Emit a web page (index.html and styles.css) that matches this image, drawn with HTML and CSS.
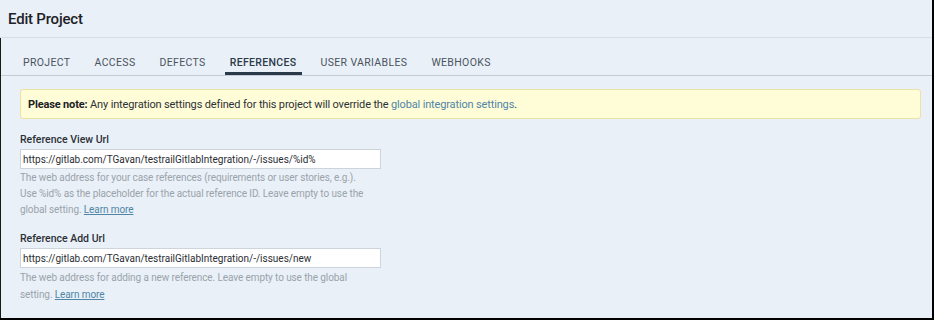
FILE: index.html
```html
<!DOCTYPE html>
<html>
<head>
<meta charset="utf-8">
<link rel="stylesheet" href="styles.css">
</head>
<body>
<div class="frame">
  <header class="head"><h1 class="title">Edit Project</h1></header>
  <div class="main">
    <nav class="tabs">
      <span class="tab">PROJECT</span>
      <span class="tab">ACCESS</span>
      <span class="tab">DEFECTS</span>
      <span class="tab active">REFERENCES</span>
      <span class="tab">USER VARIABLES</span>
      <span class="tab">WEBHOOKS</span>
    </nav>
    <div class="content">
      <div class="note"><b>Please note:</b> Any integration settings defined for this project will override the <a class="link-plain" href="#">global integration settings</a>.</div>
      <div class="field">
        <label class="label">Reference View Url</label>
        <input class="input" type="text" value="https://gitlab.com/TGavan/testrailGitlabIntegration/-/issues/%id%">
        <p class="help">The web address for your case references (requirements or user stories, e.g.).<br>Use %id% as the placeholder for the actual reference ID. Leave empty to use the<br>global setting. <a class="link" href="#">Learn more</a></p>
      </div>
      <div class="field">
        <label class="label">Reference Add Url</label>
        <input class="input" type="text" value="https://gitlab.com/TGavan/testrailGitlabIntegration/-/issues/new">
        <p class="help help-last">The web address for adding a new reference. Leave empty to use the global<br>setting. <a class="link" href="#">Learn more</a></p>
      </div>
    </div>
  </div>
</div>
</body>
</html>
```
FILE: styles.css
```css
* { box-sizing: border-box; }
html, body { margin: 0; padding: 0; }
body {
  width: 934px;
  height: 320px;
  overflow: hidden;
  background: #e9f0f8;
  font-family: Roboto, "Liberation Sans", sans-serif;
}
.frame {
  width: 934px;
  height: 320px;
  border-right: 2px solid #000;
  border-bottom: 2px solid #000;
  display: flex;
  flex-direction: column;
}
.head {
  height: 38px;
  border-bottom: 1px solid #d6dee7;
  display: flex;
  align-items: center;
  padding-left: 8px;
}
.title {
  margin: 0;
  font-size: 15px;
  font-weight: 500;
  color: #1e2126;
  letter-spacing: -0.2px;
}
.main {
  flex: 1;
  border-left: 1px solid #1a1a1a;
}
.tabs {
  display: flex;
  gap: 14px;
  padding: 0 0 0 17px;
  height: 38px;
  align-items: flex-end;
  border-bottom: 1px solid #c3ccd6;
}
.tab {
  padding: 0 5px 2px;
  font-size: 10.5px;
  letter-spacing: 0.35px;
  color: #4b545d;
  border-bottom: 3px solid transparent;
  line-height: 14px;
}
.tab.active {
  color: #2b3a48;
  font-weight: 500;
  border-bottom-color: #2b3a48;
}
.content {
  padding: 13px 11px 0 19px;
}
.note {
  height: 30px;
  background: #fffcd8;
  border: 1px solid #ece2a4;
  border-radius: 3px;
  padding: 0 7px;
  display: flex;
  align-items: center;
  font-size: 11px;
  color: #2d3237;
  letter-spacing: -0.15px;
  white-space: pre;
}
.note b { font-weight: 700; color: #1c2024; }
.link-plain { color: #4f86a6; text-decoration: none; }
.field {
  margin-top: 14px;
  display: flex;
  flex-direction: column;
  align-items: flex-start;
}
.field + .field { margin-top: 14px; }
.label {
  font-size: 10.5px;
  font-weight: 500;
  color: #2c3136;
  line-height: 14px;
  margin-bottom: 2px;
}
.input {
  width: 361px;
  height: 20px;
  border: 1px solid #cdd4dc;
  background: #fff;
  padding: 0 2px;
  font-family: Roboto, "Liberation Sans", sans-serif;
  font-size: 10px;
  color: #2a2e33;
  margin: 0;
}
.help {
  margin: 1px 0 0;
  font-size: 10px;
  line-height: 16px;
  color: #9ba3aa;
  letter-spacing: -0.1px;
}
.help-last { line-height: 17px; }
.link { color: #4f86a6; text-decoration: underline; }
```
